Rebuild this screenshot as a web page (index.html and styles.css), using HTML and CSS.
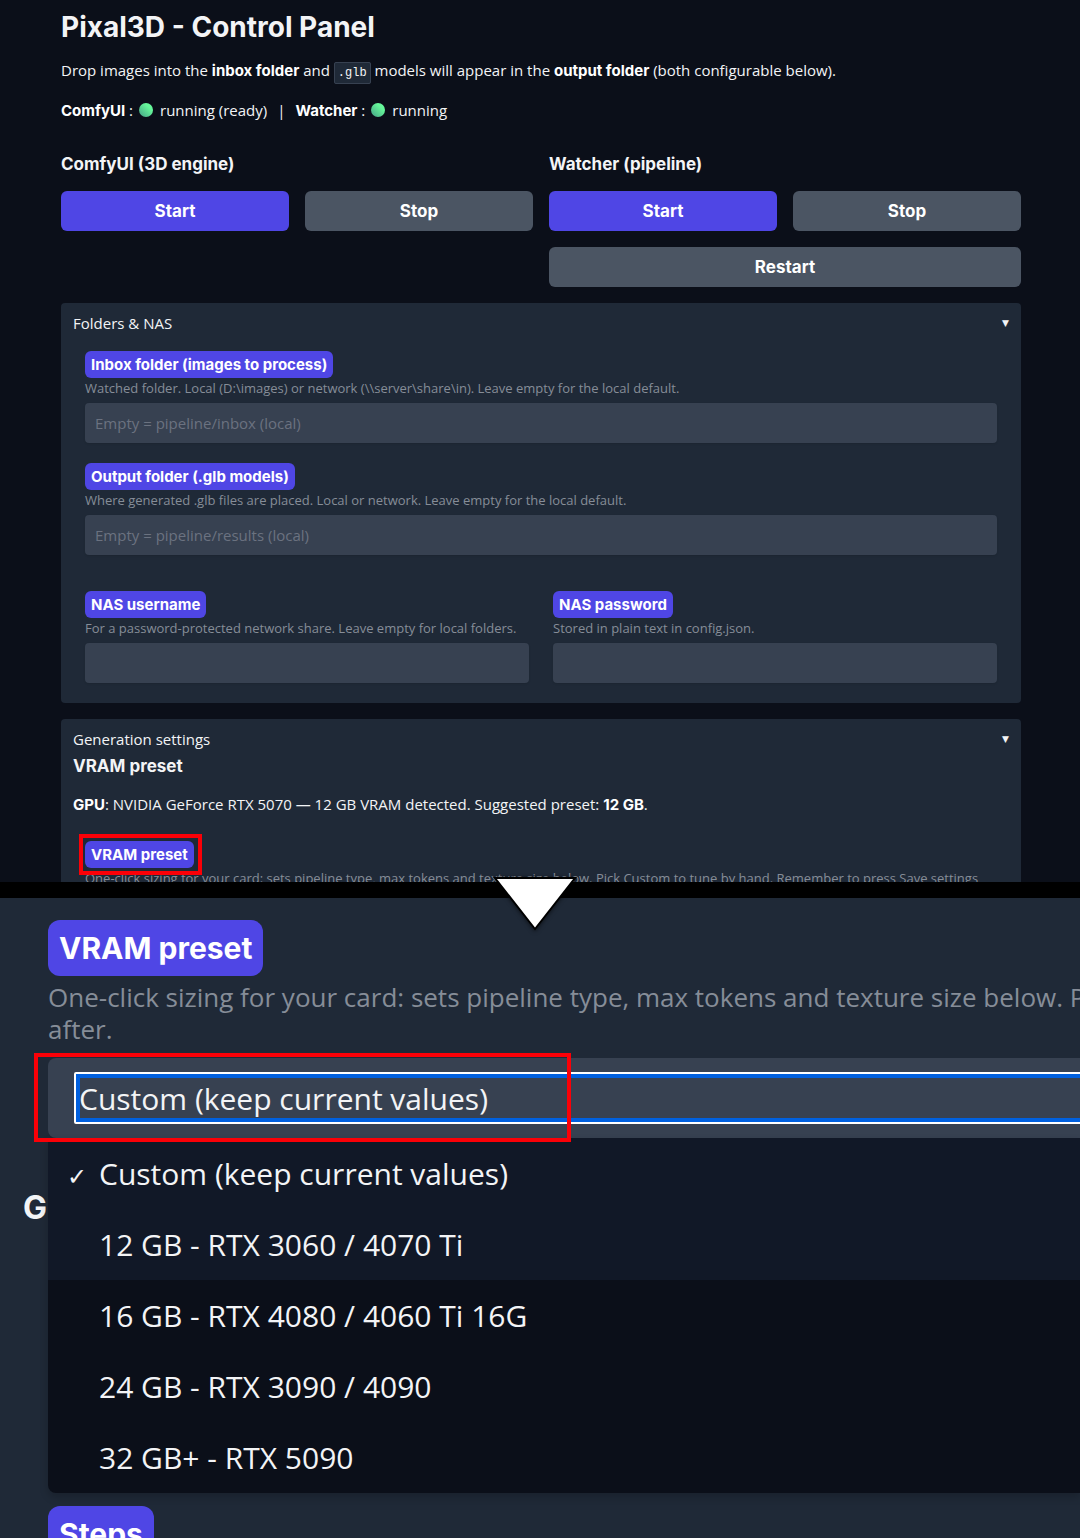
FILE: index.html
```html
<!DOCTYPE html>
<html lang="en">
<head>
    <meta charset="UTF-8">
    <meta name="viewport" content="width=device-width, initial-scale=1.0">
    <title>Pixal3D - Control Panel</title>
    <link rel="stylesheet" href="styles.css">
</head>
<body>
    <main class="panel">
        <h1>Pixal3D - Control Panel</h1>
        <p class="intro">Drop images into the <b>inbox folder</b> and <code>.glb</code> models will appear in the <b>output folder</b> (both configurable below).</p>
        <p class="status">
            <span><b>ComfyUI</b> :</span><i class="dot"></i><span>running (ready)</span>
            <span class="sep">|</span>
            <span><b>Watcher</b> :</span><i class="dot"></i><span>running</span>
        </p>

        <div class="services">
            <section>
                <h3>ComfyUI (3D engine)</h3>
                <div class="buttons">
                    <button type="button" class="btn primary">Start</button>
                    <button type="button" class="btn">Stop</button>
                </div>
            </section>
            <section>
                <h3>Watcher (pipeline)</h3>
                <div class="buttons">
                    <button type="button" class="btn primary">Start</button>
                    <button type="button" class="btn">Stop</button>
                    <button type="button" class="btn wide">Restart</button>
                </div>
            </section>
        </div>

        <details class="card" open>
            <summary>Folders &amp; NAS <span class="caret">▼</span></summary>
            <div class="fields">
                <div class="field">
                    <label for="inbox">Inbox folder (images to process)</label>
                    <p class="hint">Watched folder. Local (D:\images) or network (\\server\share\in). Leave empty for the local default.</p>
                    <input type="text" id="inbox" placeholder="Empty = pipeline/inbox (local)">
                </div>
                <div class="field">
                    <label for="output">Output folder (.glb models)</label>
                    <p class="hint">Where generated .glb files are placed. Local or network. Leave empty for the local default.</p>
                    <input type="text" id="output" placeholder="Empty = pipeline/results (local)">
                </div>
                <div class="field-row">
                    <div class="field">
                        <label for="nas-user">NAS username</label>
                        <p class="hint">For a password-protected network share. Leave empty for local folders.</p>
                        <input type="text" id="nas-user">
                    </div>
                    <div class="field">
                        <label for="nas-pass">NAS password</label>
                        <p class="hint">Stored in plain text in config.json.</p>
                        <input type="password" id="nas-pass">
                    </div>
                </div>
            </div>
        </details>

        <details class="card cut" open>
            <summary>Generation settings <span class="caret">▼</span></summary>
            <h3>VRAM preset</h3>
            <p class="gpu"><b>GPU</b>: NVIDIA GeForce RTX 5070 — 12 GB VRAM detected. Suggested preset: <b>12 GB</b>.</p>
            <div class="field">
                <label for="preset" class="marked">VRAM preset</label>
                <p class="hint">One-click sizing for your card: sets pipeline type, max tokens and texture size below. Pick Custom to tune by hand. Remember to press Save settings</p>
            </div>
        </details>
    </main>

    <div class="divider">
        <svg class="arrow" width="90" height="60" viewBox="0 0 90 60" aria-hidden="true">
            <path d="M5 5H85L45 56Z" fill="#fff" stroke="#000" stroke-width="2"/>
        </svg>
    </div>

    <!-- enlarged view of the preset field -->
    <section class="closeup">
        <label for="preset" class="tag">VRAM preset</label>
        <p class="hint">One-click sizing for your card: sets pipeline type, max tokens and texture size below. P<br>after.</p>
        <div class="combo">
            <input type="text" id="preset" role="combobox" aria-expanded="true" aria-controls="preset-list" value="Custom (keep current values)" readonly>
            <span class="marker"></span>
            <ul class="menu" id="preset-list" role="listbox">
                <li class="active" role="option" aria-selected="true"><span class="check">✓</span>Custom (keep current values)</li>
                <li class="active" role="option">12 GB - RTX 3060 / 4070 Ti</li>
                <li role="option">16 GB - RTX 4080 / 4060 Ti 16G</li>
                <li role="option">24 GB - RTX 3090 / 4090</li>
                <li role="option">32 GB+ - RTX 5090</li>
            </ul>
        </div>
        <h2>G</h2>
        <span class="tag">Steps</span>
    </section>
</body>
</html>
```
FILE: styles.css
```css
:root {
    --bg: #0b0f19;
    --card: #1f2937;
    --input: #374151;
    --grey: #4b5563;
    --accent: #4f46e5;
    --text: #f3f4f6;
    --muted: #868d98;
    --red: #fb0007;
    --bold-font: Inter, sans-serif;
}

*,
*::before,
*::after {
    box-sizing: border-box;
}

body {
    display: flex;
    flex-direction: column;
    height: 100vh;
    margin: 0;
    overflow: hidden;
    background: var(--bg);
    color: var(--text);
    font-family: "Open Sans", "Noto Sans", sans-serif;
    font-size: 15px;
    line-height: 24px;
}

h1, h2, h3, p, ul {
    margin: 0;
    padding: 0;
}

h1, h2, h3 {
    font-family: var(--bold-font);
}

b {
    font-family: var(--bold-font);
    font-weight: 700;
    line-height: 1;
    color: #fff;
}

.panel {
    flex: none;
    padding: 9px 59px 0 61px;
}

h1 {
    font-size: 28px;
    line-height: 36px;
}

h3 {
    font-size: 17px;
}

.intro {
    margin-top: 13px;
    white-space: nowrap;
}

code {
    padding: 3px;
    border: 1px solid var(--input);
    border-radius: 2px;
    background: var(--card);
    font-family: "Liberation Mono", monospace;
    font-size: 12px;
    line-height: 1;
}

.status {
    display: flex;
    align-items: center;
    gap: 6px;
    margin: 16px 0 30px;
}

.status .sep {
    margin: 0 4px;
}

.dot {
    width: 14px;
    height: 14px;
    margin-right: 1px;
    border-radius: 50%;
    background: linear-gradient(45deg, #45a187, #66f79a 70%);
}

.services {
    display: grid;
    grid-template-columns: 1fr 1fr;
    gap: 16px;
}

.buttons {
    display: grid;
    grid-template-columns: 1fr 1fr;
    gap: 16px;
    margin-top: 15px;
}

.btn {
    height: 40px;
    border: none;
    border-radius: 6px;
    background: var(--grey);
    color: #fff;
    font-family: var(--bold-font);
    font-size: 17px;
    font-weight: 700;
}

.btn.primary {
    background: var(--accent);
}

.btn.wide {
    grid-column: span 2;
}

.card {
    margin-top: 16px;
    padding: 8px 12px 20px;
    border-radius: 4px;
    background: var(--card);
}

.card summary {
    display: flex;
    justify-content: space-between;
    list-style: none;
}

.caret {
    font-family: "DejaVu Sans", sans-serif;
    font-size: 9px;
}

.fields {
    display: flex;
    flex-direction: column;
    gap: 20px;
    padding: 16px 12px 0;
}

.field-row {
    display: grid;
    grid-template-columns: 1fr 1fr;
    gap: 24px;
    padding-top: 16px;
}

.field label {
    display: block;
    width: fit-content;
    padding: 0 6px;
    border-radius: 6px;
    background: var(--accent);
    color: #fff;
    font-family: var(--bold-font);
    font-weight: 700;
    line-height: 27px;
}

.hint {
    color: var(--muted);
    font-size: 13px;
    line-height: 20px;
    white-space: nowrap;
}

.field input {
    display: block;
    width: 100%;
    height: 40px;
    margin-top: 5px;
    padding: 0 10px;
    border: none;
    border-radius: 4px;
    background: var(--input);
    color: var(--text);
    font-family: inherit;
    font-size: 15px;
    box-shadow: 0 1px 2px rgba(0, 0, 0, 0.1);
}

.field input::placeholder {
    color: #6b7280;
}

/* runs under the divider */
.cut {
    padding-bottom: 0;
    border-radius: 4px 4px 0 0;
}

.cut h3 {
    margin-top: 3px;
}

.gpu {
    margin-top: 14px;
}

.cut .field {
    padding: 25px 12px 0;
}

.cut .hint {
    height: 14px;
    overflow: hidden;
}

.marked {
    position: relative;
}

.marked::after {
    content: "";
    position: absolute;
    inset: -7px -8px -7px -6px;
    border: 4px solid var(--red);
}

.divider {
    position: relative;
    flex: none;
    height: 16px;
    background: #000;
}

.arrow {
    position: absolute;
    top: -9px;
    left: 50%;
    z-index: 3;
    margin-left: -50px;
    filter: drop-shadow(0 1px 2px rgba(0, 0, 0, 0.6));
}

.closeup {
    flex: 1;
    min-height: 0;
    padding: 22px 0 0 48px;
    overflow: hidden;
    background: var(--card);
}

.tag {
    display: block;
    width: fit-content;
    padding: 0 11px;
    border-radius: 12px;
    background: var(--accent);
    color: #fff;
    font-family: var(--bold-font);
    font-size: 30px;
    font-weight: 700;
    line-height: 56px;
}

.closeup .hint {
    margin-top: 5px;
    font-size: 26px;
    line-height: 32px;
}

.combo {
    position: relative;
    height: 80px;
    margin-top: 13px;
    padding: 14px 0 0 26px;
    border-radius: 8px 0 0 8px;
    background: var(--input);
}

.combo input {
    display: block;
    width: 110%;
    height: 52px;
    padding: 0 3px;
    border: 2px solid #fff;
    border-radius: 2px;
    outline: none;
    background: var(--input);
    box-shadow: inset 0 0 0 4px #0060df;
    color: var(--text);
    font-family: inherit;
    font-size: 30px;
}

.marker {
    position: absolute;
    top: -5px;
    left: -14px;
    z-index: 2;
    width: 537px;
    height: 89px;
    border: 4px solid var(--red);
}

.menu {
    position: absolute;
    top: 100%;
    left: 0;
    right: 0;
    z-index: 1;
    list-style: none;
    border-radius: 0 0 0 8px;
    background: var(--bg);
    box-shadow: 0 4px 8px rgba(0, 0, 0, 0.2);
    overflow: hidden;
    font-size: 30px;
    line-height: 71px;
}

.menu li {
    padding-left: 51px;
}

.menu .active {
    background: #111827;
}

.check {
    display: inline-block;
    width: 32px;
    margin-left: -32px;
    font-size: 24px;
    line-height: 1;
}

.closeup h2 {
    margin: 50px 0 278px -25px;
    font-size: 32px;
    line-height: 40px;
}
```
